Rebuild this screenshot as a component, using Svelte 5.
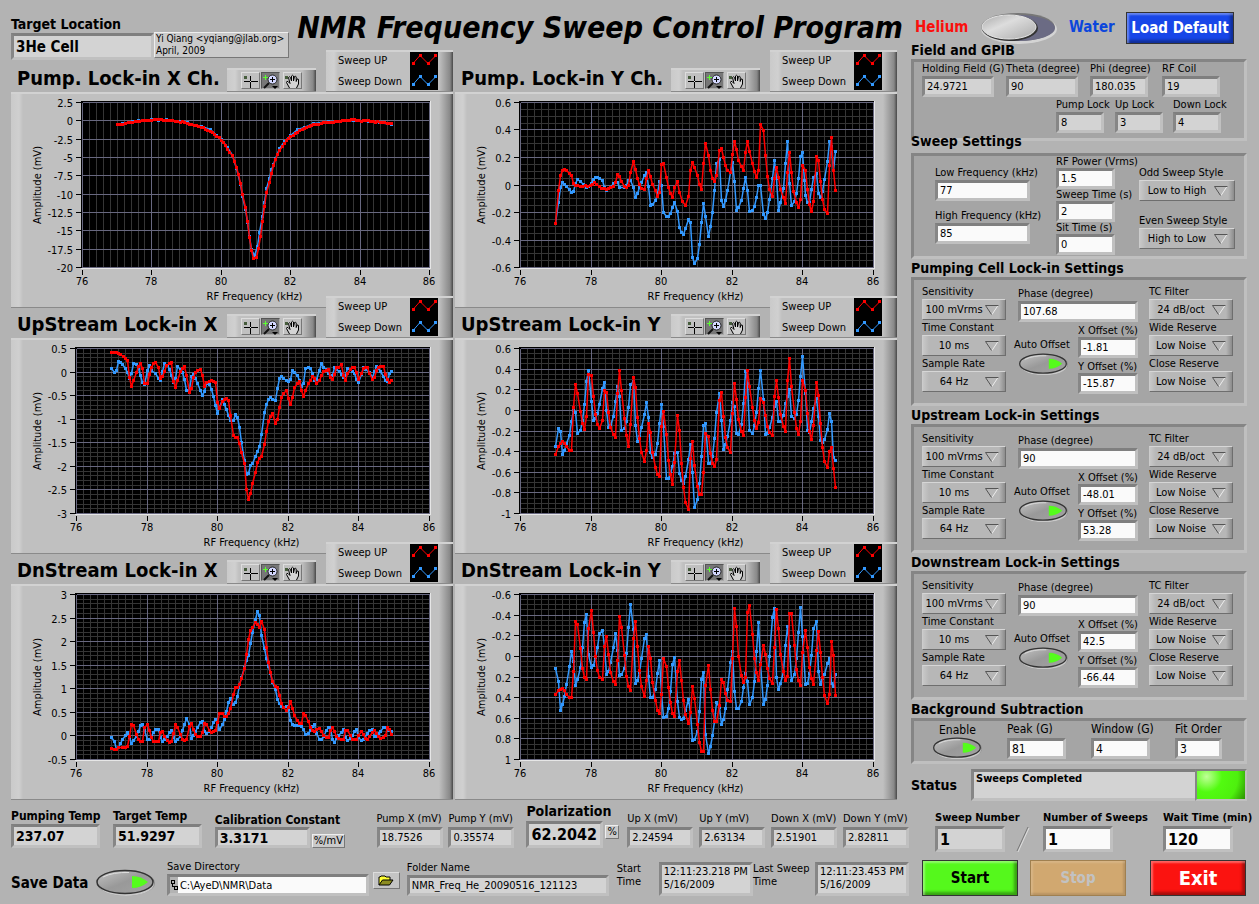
<script lang="ts">
  type Chart = {
    title: string;
    left: number;
    max: number;
    min: number;
    major: number;
    minor: number;
    start: number;
    perKhz: number;
    zero: number;
    perMv: number;
    up: string;
    down: string;
  };

  // Plot area inside a chart panel
  const RIGHT = 418;
  const TOP = 8;
  const BOTTOM = 173;

  const charts: Chart[] = [
    {
      title: 'Pump. Lock-in X Ch.',
      left: 71, max: 2.5, min: -20, major: 2.5, minor: 0,
      start: 247, perKhz: 104.2, zero: 361, perMv: 21.95,
      up: '352,373 360,373 367,371 376,370 384,367 391,367 398,365 405,364 412,364 419,362 427,361 434,361 441,361 448,359 455,359 462,358 469,357 476,357 483,358 490,359 497,360 504,361 511,360 518,361 525,362 532,364 540,365 547,364 554,366 561,369 568,371 575,373 582,376 589,376 596,377 604,380 610,382 616,386 622,389 630,393 637,397 643,401 650,407 658,412 664,421 670,427 676,436 682,447 689,455 698,466 703,484 709,502 715,523 721,549 727,581 736,620 742,662 748,709 754,748 760,772 769,769 775,744 781,706 787,661 793,616 799,576 808,547 814,520 820,496 826,478 833,463 838,451 847,438 853,430 859,421 866,415 873,408 880,404 887,400 893,396 900,390 907,386 914,383 921,381 928,378 935,375 942,373 950,372 957,371 964,370 971,366 978,365 985,365 992,365 1000,365 1007,363 1014,362 1021,362 1028,361 1035,361 1042,360 1049,360 1056,358 1063,358 1070,360 1077,361 1084,362 1091,361 1098,361 1105,361 1112,362 1120,364 1127,365 1134,364 1141,365 1148,365 1155,367 1162,369 1169,370 1176,370',
      down: '352,372 367,370 384,367 398,363 415,359 434,359 455,357 476,361 500,357 518,359 540,363 561,367 575,371 604,377 630,388 650,404 664,418 682,440 698,466 709,505 721,552 727,588 736,625 742,666 748,708 754,745 763,763 772,737 778,695 787,646 793,604 799,565 808,535 814,508 820,492 826,474 838,444 853,423 873,404 893,388 914,380 942,370 985,363 1020,362 1060,361 1105,363 1140,367 1176,371'
    },
    {
      title: 'Pump. Lock-in Y Ch.',
      left: 65, max: 0.6, min: -0.6, major: 0.2, minor: 0.05,
      start: 196, perKhz: 105.9, zero: 554, perMv: 411,
      up: '301,670 310,571 316,526 322,511 328,508 335,511 343,520 349,526 355,550 361,556 368,556 376,557 383,559 390,554 397,559 405,555 412,552 419,547 425,553 433,559 440,565 448,565 455,568 461,565 467,562 476,559 482,547 488,523 494,530 500,545 508,557 514,562 520,556 526,517 535,484 541,508 547,535 554,553 560,565 568,568 574,535 580,511 586,529 593,552 601,571 607,587 613,575 620,493 626,490 634,532 640,562 646,578 652,590 658,560 667,545 673,575 683,602 690,614 700,587 706,511 712,487 718,502 727,527 733,553 739,568 746,490 752,430 760,466 766,511 772,535 778,545 785,527 794,452 799,445 805,472 811,496 817,511 826,517 832,463 838,425 845,448 851,481 859,500 865,511 871,457 878,425 884,454 892,490 898,514 904,532 910,511 916,373 925,391 932,466 938,530 943,566 952,587 958,536 964,502 970,532 976,568 985,592 991,610 997,517 1004,458 1010,517 1016,572 1024,607 1030,622 1037,598 1042,496 1051,511 1057,568 1063,613 1069,634 1075,604 1084,469 1090,481 1096,545 1102,596 1108,628 1117,640 1123,496 1129,412 1135,511 1141,571',
      down: '301,668 310,607 316,562 322,547 328,553 334,558 343,568 349,577 355,574 361,550 367,538 376,544 386,553 394,562 401,559 408,550 415,538 421,532 428,532 434,535 442,541 448,560 455,571 467,562 476,550 487,547 493,562 507,562 513,554 520,541 527,541 535,562 541,592 547,580 553,562 560,547 568,526 574,517 580,559 586,616 592,613 601,601 607,580 614,545 620,554 626,635 634,649 640,649 646,640 652,622 658,607 667,634 673,682 679,697 685,703 691,685 700,656 706,667 712,772 718,790 727,775 733,733 739,667 745,610 752,649 760,709 766,679 772,637 778,571 785,490 794,478 799,601 805,617 811,601 817,571 826,517 832,487 838,545 845,629 851,622 859,601 865,565 871,532 878,571 884,634 892,629 898,619 904,592 910,556 916,556 925,643 931,655 938,637 943,598 952,535 958,481 964,535 970,631 976,607 985,565 991,490 997,425 1003,550 1009,616 1018,604 1024,580 1030,535 1036,469 1042,457 1048,540 1052,586 1058,607 1063,605 1069,568 1075,532 1084,520 1090,580 1096,590 1102,574 1108,538 1117,484 1123,425 1129,440 1135,511 1141,454'
    },
    {
      title: 'UpStream Lock-in X',
      left: 65, max: 0.5, min: -3, major: 0.5, minor: 0.1,
      start: 229, perKhz: 105.9, zero: 185, perMv: 141,
      up: '334,125 343,125 349,125 355,128 361,131 370,137 376,143 382,149 388,200 394,227 400,209 410,185 416,167 421,160 427,173 433,220 442,218 448,191 454,172 460,160 466,157 475,170 481,203 488,197 494,182 500,164 508,160 514,157 520,212 526,230 532,209 541,184 547,175 553,169 559,194 568,245 574,233 580,200 586,185 592,179 600,178 607,194 613,227 619,215 628,214 634,211 640,214 646,217 652,275 658,293 667,272 673,266 679,265 685,271 692,314 700,376 706,382 712,382 718,398 725,425 733,458 739,535 745,566 751,548 758,517 767,485 773,455 778,443 785,439 793,401 799,362 805,334 812,317 818,308 826,338 832,326 838,290 845,262 851,248 859,239 865,265 871,281 877,260 884,232 892,218 898,212 904,239 910,257 916,239 925,220 931,209 937,199 943,203 950,218 958,209 964,194 970,184 978,181 985,178 991,200 997,206 1003,191 1010,172 1016,170 1024,163 1030,194 1036,211 1043,190 1050,178 1057,170 1063,170 1069,185 1076,206 1084,190 1090,173 1096,170 1102,170 1109,188 1117,208 1123,202 1129,181 1136,172 1142,169 1150,169 1156,191 1162,206 1168,217 1175,211',
      down: '334,175 343,187 349,181 355,154 361,157 367,163 376,175 382,187 388,203 394,188 400,160 409,163 416,173 421,194 427,215 433,223 442,181 448,166 454,179 466,190 475,205 481,209 488,182 494,160 501,166 508,178 514,196 520,215 526,205 532,169 541,176 547,187 553,208 559,239 568,236 574,197 580,191 586,203 592,218 601,239 607,254 613,242 619,218 628,221 634,236 640,257 646,284 652,308 658,292 667,266 673,281 679,296 685,314 692,329 700,329 706,311 712,320 718,352 725,395 733,448 739,490 745,488 751,464 758,458 767,439 773,422 778,407 785,371 793,305 799,281 805,266 812,262 818,268 826,269 832,233 838,203 845,199 851,203 859,209 865,214 871,208 877,181 884,185 892,194 898,209 904,227 910,218 916,173 925,170 931,175 937,188 943,209 950,206 958,181 964,160 970,170 978,178 985,188 991,199 997,194 1003,172 1010,178 1018,182 1024,191 1030,200 1036,196 1042,175 1050,178 1057,184 1063,190 1069,206 1076,217 1084,193 1090,172 1096,178 1109,187 1117,200 1123,184 1129,169 1136,175 1142,184 1150,197 1156,209 1162,212 1168,190 1175,182'
    },
    {
      title: 'UpStream Lock-in Y',
      left: 65, max: 0.6, min: -1, major: 0.2, minor: 0.05,
      start: 196, perKhz: 105.9, zero: 331, perMv: 307,
      up: '301,461 310,440 316,431 322,425 329,431 335,440 343,449 349,451 355,323 361,253 367,281 377,335 383,371 388,388 394,350 400,224 409,227 415,290 421,344 428,374 434,386 442,362 448,271 455,278 460,338 467,383 476,404 481,412 487,281 493,212 500,272 508,356 514,406 520,440 527,374 535,232 541,262 547,353 553,415 559,455 568,482 574,449 580,371 586,398 592,455 601,500 607,523 613,529 619,380 626,335 634,404 640,479 646,523 652,553 659,485 667,347 673,392 679,488 686,562 691,604 700,626 706,473 712,425 719,494 727,557 733,580 739,581 745,515 752,401 760,409 766,458 772,490 778,499 785,476 793,302 799,277 805,350 811,412 818,443 826,455 832,341 838,250 845,299 851,359 859,395 865,406 872,293 877,212 884,259 892,323 898,361 904,386 910,368 916,296 925,307 931,347 937,380 943,397 952,406 958,290 964,242 970,293 976,343 985,380 991,395 997,241 1003,178 1009,259 1018,338 1024,385 1030,404 1037,364 1042,242 1051,271 1057,341 1063,395 1069,419 1076,377 1084,247 1090,287 1096,371 1102,442 1108,482 1117,502 1123,454 1129,442 1135,503 1141,562',
      down: '301,439 310,385 316,394 322,463 328,451 335,430 343,406 349,365 355,332 361,337 367,400 376,391 383,362 388,314 394,245 400,212 409,305 415,361 421,356 428,340 434,313 442,265 448,247 454,332 460,383 467,377 476,350 481,304 487,260 493,290 500,392 508,386 514,365 520,322 526,253 535,245 541,377 547,425 553,410 560,382 568,343 574,307 580,352 586,455 593,470 601,462 607,430 613,371 619,313 626,380 634,535 640,535 646,520 652,499 658,460 667,455 673,520 679,541 685,548 691,529 700,478 706,433 712,515 718,620 727,596 733,548 739,469 745,377 751,371 760,490 766,490 772,467 778,415 785,338 793,280 799,362 805,446 811,433 818,410 826,362 832,307 838,320 845,400 851,403 859,374 865,310 871,214 877,250 884,391 892,400 898,377 904,337 910,265 916,212 925,300 931,403 937,400 943,383 952,352 958,319 964,304 970,364 976,364 985,347 991,310 997,290 1003,268 1009,350 1018,355 1024,342 1030,301 1036,229 1042,172 1051,280 1057,391 1063,396 1069,365 1075,325 1085,295 1090,350 1096,421 1102,428 1108,419 1117,388 1123,341 1129,364 1135,470 1141,479'
    },
    {
      title: 'DnStream Lock-in X',
      left: 65, max: 3, min: -0.5, major: 0.5, minor: 0.1,
      start: 229, perKhz: 105.9, zero: 556, perMv: 141.2,
      up: '334,595 343,598 349,597 355,592 367,592 376,590 382,587 388,559 394,521 400,526 409,551 415,568 421,574 427,574 433,532 442,521 448,541 454,562 460,572 466,574 475,574 481,547 488,542 494,557 501,571 508,577 514,574 520,550 526,521 532,530 541,553 547,566 553,571 559,568 567,527 574,518 580,536 587,553 593,559 601,559 607,547 613,518 619,521 628,541 634,545 640,544 646,539 652,517 658,488 667,488 673,497 679,497 685,488 692,475 700,433 706,412 712,410 718,403 725,383 733,355 739,313 745,266 751,241 757,230 766,217 773,221 778,230 785,214 793,238 799,290 805,335 811,367 818,394 826,407 832,412 838,436 844,458 851,472 859,481 865,470 871,452 877,473 884,494 892,511 898,520 904,520 911,490 917,494 925,514 931,532 937,541 943,544 950,538 958,535 964,544 970,556 978,560 985,562 991,541 997,530 1003,544 1009,559 1016,565 1024,568 1030,566 1036,541 1042,539 1050,556 1057,566 1063,568 1069,568 1076,554 1084,544 1090,553 1096,563 1102,566 1109,557 1117,547 1123,541 1129,550 1136,559 1142,563 1150,562 1156,554 1162,532 1168,538 1175,551',
      down: '334,562 343,574 349,598 355,590 361,580 367,568 376,556 382,547 388,562 394,580 400,571 409,559 415,544 421,524 427,523 433,541 442,568 448,566 454,558 460,545 466,538 475,538 481,562 488,574 494,568 501,557 508,547 514,539 520,562 526,574 532,568 541,559 547,541 553,523 559,505 568,521 574,563 580,556 587,544 593,530 601,515 607,514 613,542 619,550 628,544 634,532 640,517 646,506 652,520 658,536 667,523 673,506 679,484 685,457 692,445 700,463 706,457 712,437 718,403 725,380 733,350 739,331 745,314 751,280 757,245 766,208 772,184 778,194 785,256 793,293 799,323 805,347 811,370 818,395 826,418 832,448 838,460 844,467 851,472 859,468 865,476 871,509 877,523 884,526 892,526 898,526 904,529 911,538 917,553 925,550 931,541 937,529 943,523 950,550 958,568 964,568 970,559 978,541 985,530 991,530 997,568 1003,575 1009,565 1016,556 1024,547 1030,538 1036,560 1042,571 1050,563 1057,556 1063,544 1069,538 1076,560 1084,571 1090,568 1102,550 1109,539 1117,538 1123,559 1129,559 1136,550 1142,544 1150,532 1156,530 1162,540 1175,542'
    },
    {
      title: 'DnStream Lock-in Y',
      left: 65, max: -0.6, min: 1, major: 0.2, minor: 0.05,
      start: 196, perKhz: 105.9, zero: 319, perMv: -307.5,
      up: '301,433 310,421 316,418 322,415 328,420 335,433 343,442 349,442 355,364 361,214 367,224 377,295 383,355 389,382 394,388 400,235 409,182 415,247 421,320 428,361 434,382 442,388 448,290 454,260 460,313 467,367 476,394 481,403 487,330 493,200 500,233 508,316 514,380 520,409 527,421 535,265 541,214 547,290 553,361 560,409 568,439 574,391 580,290 586,325 593,398 601,452 607,479 613,490 619,433 626,325 634,350 640,412 646,458 652,488 658,497 667,364 673,332 679,391 685,452 691,493 700,520 706,487 712,410 718,445 727,523 733,577 740,604 746,604 752,406 760,346 766,419 772,481 778,512 785,514 793,464 799,388 805,397 811,430 817,451 826,455 832,325 838,175 845,230 851,320 859,376 865,398 871,383 878,187 884,166 892,253 898,325 904,367 910,391 916,343 925,286 931,313 937,355 943,385 952,400 958,292 964,179 970,235 976,313 985,364 991,391 997,380 1003,190 1009,191 1018,286 1024,359 1030,391 1036,407 1042,307 1051,241 1057,292 1063,352 1069,386 1075,403 1084,301 1090,245 1096,307 1102,383 1108,436 1117,461 1123,433 1129,274 1135,316 1141,436',
      down: '301,355 310,394 316,481 322,463 328,439 335,403 343,349 349,304 355,334 361,407 367,388 377,352 383,292 388,217 394,194 400,313 409,352 415,346 421,322 428,292 434,250 442,241 448,290 454,373 460,365 467,338 476,292 481,250 487,300 493,376 500,373 508,355 514,310 520,232 527,163 535,240 541,400 547,391 553,367 560,325 568,265 574,254 580,380 586,442 593,442 601,418 607,370 613,331 619,430 626,502 634,499 640,475 646,425 652,343 658,322 667,455 673,502 679,508 685,505 691,480 700,448 706,485 712,571 718,568 727,544 733,484 739,388 745,367 752,553 760,610 766,589 772,556 778,512 785,457 793,470 799,523 805,508 811,475 817,418 826,337 832,304 838,424 845,475 851,475 859,454 865,412 871,370 878,394 884,463 892,442 898,394 904,304 910,217 916,340 925,463 931,448 937,406 943,320 952,203 958,176 964,383 970,418 976,400 985,365 991,286 997,230 1003,290 1009,391 1018,373 1024,325 1030,247 1036,172 1042,260 1051,403 1057,400 1063,370 1069,316 1075,236 1084,214 1090,364 1096,403 1102,385 1108,373 1117,340 1123,325 1129,400 1135,409 1141,373'
    }
  ];

  const lockins = [
    { name: 'Pumping Cell', phase: '107.68', x: '-1.81', y: '-15.87' },
    { name: 'Upstream', phase: '90', x: '-48.01', y: '53.28' },
    { name: 'Downstream', phase: '90', x: '42.5', y: '-66.44' }
  ];

  let autoOffset = $state([true, true, true]);
  let saveData = $state(true);
  let subtract = $state(true);
  let water = $state(false);

  function xPos(c: Chart, khz: number) {
    return Math.round(c.left + ((khz - 76) / 10) * (RIGHT - c.left));
  }

  function yPos(c: Chart, mv: number) {
    return Math.round(TOP + ((c.max - mv) / (c.max - c.min)) * (BOTTOM - TOP));
  }

  function range(from: number, to: number, step: number) {
    const n = Math.round(Math.abs(to - from) / step);
    const dir = to > from ? 1 : -1;
    return Array.from({ length: n + 1 }, (_, i) => +(from + dir * i * step).toFixed(2));
  }

  function points(c: Chart, raw: string) {
    return raw.split(' ').map((pair) => {
      const [x, y] = pair.split(',').map(Number);
      return [xPos(c, 76 + (x - c.start) / c.perKhz), yPos(c, (c.zero - y) / c.perMv)];
    });
  }

  function line(c: Chart, raw: string) {
    return 'M' + points(c, raw).map((p) => p.join(' ')).join('L');
  }

  function markers(c: Chart, raw: string) {
    return points(c, raw).map(([x, y]) => `M${x - 1.5} ${y}h3`).join('');
  }

  function verticals(c: Chart, step: number) {
    return range(76, 86, step).map((v) => `M${xPos(c, v)} ${TOP}V${BOTTOM}`).join('');
  }

  function horizontals(c: Chart, step: number) {
    return range(c.max, c.min, step).map((v) => `M${c.left} ${yPos(c, v)}H${RIGHT}`).join('');
  }
</script>

{#snippet field(label: string, value: string, kind = '')}
  <label class="field {kind}">
    <span>{label}</span>
    <input type="text" {value} readonly={kind.includes('ro')} />
  </label>
{/snippet}

{#snippet picker(label: string, value: string)}
  <label class="picker">
    <span>{label}</span>
    <span class="ring">
      <select><option>{value}</option></select>
      <svg width="14" height="10" viewBox="0 0 14 10" aria-hidden="true">
        <path d="M13 .5L7 9.5" stroke="#eee" fill="none" />
        <path d="M13.5 .5H.5L6.5 9.5" stroke="#555" fill="none" />
      </svg>
    </span>
  </label>
{/snippet}

{#snippet led()}
  <svg viewBox="0 0 60 28" aria-hidden="true">
    <defs>
      <linearGradient id="ledFace" x1="0" y1="0" x2="1" y2="1">
        <stop offset="0" stop-color="#c4c4c4" />
        <stop offset=".5" stop-color="#999" />
        <stop offset="1" stop-color="#a2a2a2" />
      </linearGradient>
    </defs>
    <ellipse cx="31" cy="15" rx="29" ry="13" fill="#8c8c8c" />
    <ellipse cx="31" cy="16" rx="28" ry="12" fill="#c9c9c9" />
    <ellipse cx="30" cy="14" rx="28" ry="11.5" fill="url(#ledFace)" stroke="#333" stroke-width="1.5" />
    <path d="M8 9Q18 4 34 4.5" stroke="#e0e0e0" fill="none" />
    <path d="M37 8Q46 8 53 14Q46 20 37 20Z" fill="#55fc1c" />
  </svg>
{/snippet}

{#snippet toolbar()}
  <div class="toolbar">
    <button aria-label="Cursor">
      <svg width="19" height="16" shape-rendering="crispEdges">
        <rect x="3" y="3" width="3" height="3" fill="#465c3c" />
        <path d="M3 8.5h5M11 8.5h6M9.5 3v4M9.5 10v5M8 8.5h3M9.5 7v3" stroke="#000" />
        <rect x="9" y="8" width="1" height="1" fill="#ddd" />
      </svg>
    </button>
    <button class="on" aria-label="Zoom">
      <svg width="19" height="16">
        <path d="M4.5 2v5M2 4.5h5" stroke="#5cff30" />
        <path d="M8 10L3 15" stroke="#111" stroke-width="2" />
        <circle cx="11.5" cy="6.5" r="4.5" fill="#d4d8ff" stroke="#222" />
        <path d="M11.5 4v5M9 6.5h5" stroke="#000" />
        <path d="M11 13h6l-3 3z" fill="#000" />
      </svg>
    </button>
    <button class="pan" aria-label="Pan">
      <svg width="19" height="16">
        <rect x="2" y="3" width="3" height="3" fill="#465c3c" />
        <path d="M6.5 15L3.5 9.5Q3.5 8 5 8.5L7 10.5L5.5 4.5Q6.5 3 7.5 4.5L8.5 8V3Q9.5 1.5 10.5 3V8L11.5 3.5Q12.5 2.5 13.2 4V8.5L14 6Q15.5 5.5 15.5 7V11L13.5 15" fill="#d4d4d4" stroke="#000" />
      </svg>
    </button>
  </div>
{/snippet}

{#snippet legend()}
  <div class="legend">
    <div class="names"><span>Sweep UP</span><span>Sweep Down</span></div>
    <svg width="28" height="38" aria-hidden="true">
      <rect width="28" height="38" fill="#000" />
      <path d="M3 11.5L10 3.5L18 11.5L26 3.5" stroke="#f00" fill="none" />
      <path d="M2 11.5h3M9 3.5h3M17 11.5h3M24 3.5h3" stroke="#f00" stroke-width="3" />
      <path d="M3 32.5L10 24.5L18 32.5L26 24.5" stroke="#39f" fill="none" />
      <path d="M2 32.5h3M9 24.5h3M17 32.5h3M24 24.5h3" stroke="#39f" stroke-width="3" />
    </svg>
  </div>
{/snippet}

<div class="page">
  <main>
    <header>
      <label class="field big target">
        <span>Target Location</span>
        <input type="text" value="3He Cell" readonly />
      </label>
      <p class="note">Yi Qiang &lt;yqiang@jlab.org&gt;<br />April, 2009</p>
      <h1>NMR Frequency Sweep Control Program</h1>
    </header>

    <div class="charts">
      {#each charts as c}
        <section class="chart">
          <div class="bar">
            <h2>{c.title}</h2>
            {@render toolbar()}
            {@render legend()}
          </div>
          <div class="panel">
            <svg viewBox="0 0 442 213" role="img" aria-label={c.title}>
              <rect x={c.left - 1} y={TOP - 1} width={RIGHT - c.left + 3} height={BOTTOM - TOP + 3} fill="#e6e6e6" />
              <rect x={c.left - 1} y={TOP - 1} width={RIGHT - c.left + 2} height={BOTTOM - TOP + 2} fill="#000" />
              <g fill="none" shape-rendering="crispEdges" transform="translate(.5 .5)">
                <path d={verticals(c, 0.2)} stroke="#353535" />
                {#if c.minor}
                  <path d={horizontals(c, c.minor)} stroke="#353535" />
                {/if}
                <path d={verticals(c, 2) + horizontals(c, c.major)} stroke="#686880" />
                {#each range(c.max, c.min, c.major) as v}
                  <path d="M{c.left - 7} {yPos(c, v)}h5" stroke="#000" />
                {/each}
                {#each range(76, 86, 2) as v}
                  <path d="M{xPos(c, v)} {BOTTOM + 2}v5" stroke="#000" />
                {/each}
              </g>
              <g fill="none" transform="translate(.5 .5)" stroke-linejoin="bevel">
                <path d={line(c, c.down)} stroke="#39f" stroke-width="1.5" />
                <path d={markers(c, c.down)} stroke="#39f" stroke-width="3" />
                <path d={line(c, c.up)} stroke="#f00" stroke-width="1.5" />
                <path d={markers(c, c.up)} stroke="#f00" stroke-width="3" />
              </g>
              {#each range(c.max, c.min, c.major) as v}
                <text x={c.left - 9} y={yPos(c, v) + 5} text-anchor="end">{v}</text>
              {/each}
              {#each range(76, 86, 2) as v}
                <text x={xPos(c, v)} y="191" text-anchor="middle">{v}</text>
              {/each}
              <text x={(c.left + RIGHT) / 2 - 1} y="206" text-anchor="middle">RF Frequency (kHz)</text>
              <text transform="translate(30 91) rotate(-90)" text-anchor="middle">Amplitude (mV)</text>
            </svg>
          </div>
        </section>
      {/each}
    </div>

    <div class="readouts">
      {@render field('Pumping Temp', '237.07', 'ro strong')}
      {@render field('Target Temp', '51.9297', 'ro strong')}
      <div class="unitField calibration">
        {@render field('Calibration Constant', '3.3171', 'ro strong')}
        <span class="unit">%/mV</span>
      </div>
      {@render field('Pump X (mV)', '18.7526', 'ro')}
      {@render field('Pump Y (mV)', '0.35574', 'ro')}
      <div class="unitField polarization">
        {@render field('Polarization', '62.2042', 'ro big')}
        <span class="unit">%</span>
      </div>
      {@render field('Up X (mV)', '2.24594', 'ro')}
      {@render field('Up Y (mV)', '2.63134', 'ro')}
      {@render field('Down X (mV)', '2.51901', 'ro')}
      {@render field('Down Y (mV)', '2.82811', 'ro')}
    </div>

    <div class="saving">
      <span class="head" id="saveLabel">Save Data</span>
      <button class="toggle large" role="switch" aria-checked={saveData} aria-labelledby="saveLabel" onclick={() => (saveData = !saveData)}>
        {@render led()}
      </button>
      <label class="field path">
        <span>Save Directory</span>
        <span class="well">
          <svg width="8" height="12" shape-rendering="crispEdges" aria-hidden="true">
            <path d="M1.5 1.5h3v3h-3zM2.5 5v2.5H4M4.5 7.5h3v3h-3z" stroke="#000" fill="none" />
          </svg>
          <input type="text" value="C:\AyeD\NMR\Data" />
        </span>
      </label>
      <button class="browse" aria-label="Browse">
        <svg width="16" height="11" aria-hidden="true">
          <path d="M1 10V2h1l1-1h4l1 1h4v3" fill="#ff3" stroke="#000" />
          <path d="M1 10L4.5 5H15L11.5 10Z" fill="#8c8c20" stroke="#000" />
        </svg>
      </button>
      {@render field('Folder Name', 'NMR_Freq_He_20090516_121123', 'ro folder')}
      <span class="when">Start Time</span>
      <output class="stamp">12:11:23.218 PM<br />5/16/2009</output>
      <span class="when">Last Sweep Time</span>
      <output class="stamp">12:11:23.453 PM<br />5/16/2009</output>
    </div>
  </main>

  <aside>
    <div class="mode">
      <span class="helium">Helium</span>
      <button class="slide" role="switch" aria-checked={water} aria-label="Helium or Water" onclick={() => (water = !water)}>
        <svg width="78" height="32" viewBox="0 0 78 32" aria-hidden="true">
          <defs>
            <linearGradient id="knob" x1="0" y1="0" x2="1" y2="1">
              <stop offset="0" stop-color="#aaa" />
              <stop offset=".4" stop-color="#ddd" />
              <stop offset="1" stop-color="#aaa" />
            </linearGradient>
          </defs>
          <ellipse cx="39" cy="17" rx="38" ry="15" fill="#d4d4d4" />
          <ellipse cx="38" cy="15" rx="37" ry="14" fill="#777" />
          <ellipse cx="39" cy="16" rx="36" ry="13" fill="#6b6b84" />
          <ellipse cx={water ? 48 : 30} cy="16" rx="28" ry="13" fill="#333" />
          <ellipse cx={water ? 47 : 29} cy="15" rx="27" ry="12" fill="url(#knob)" stroke="#e6e6e6" />
        </svg>
      </button>
      <span class="water">Water</span>
      <button class="push blue">Load Default</button>
    </div>

    <section>
      <h3>Field and GPIB</h3>
      <div class="box gpib">
        <div class="coils">
          {@render field('Holding Field (G)', '24.9721', 'ro')}
          {@render field('Theta (degree)', '90', 'ro')}
          {@render field('Phi (degree)', '180.035', 'ro')}
          {@render field('RF Coil', '19', 'ro')}
        </div>
        <div class="locks">
          {@render field('Pump Lock', '8', 'ro')}
          {@render field('Up Lock', '3', 'ro')}
          {@render field('Down Lock', '4', 'ro')}
        </div>
      </div>
    </section>

    <section class="sweepSection">
      <h3>Sweep Settings</h3>
      <div class="box sweep">
        <div class="freqs">
          {@render field('Low Frequency (kHz)', '77')}
          {@render field('High Frequency (kHz)', '85')}
        </div>
        <div class="times">
          {@render field('RF Power (Vrms)', '1.5')}
          {@render field('Sweep Time (s)', '2')}
          {@render field('Sit Time (s)', '0')}
        </div>
        <div class="styles">
          {@render picker('Odd Sweep Style', 'Low to High')}
          {@render picker('Even Sweep Style', 'High to Low')}
        </div>
      </div>
    </section>

    {#each lockins as l, i}
      <section>
        <h3>{l.name} Lock-in Settings</h3>
        <div class="box lockin">
          <div class="stack">
            {@render picker('Sensitivity', '100 mVrms')}
            {@render picker('Time Constant', '10 ms')}
            {@render picker('Sample Rate', '64 Hz')}
          </div>
          <div class="middle">
            {@render field('Phase (degree)', l.phase, 'phase')}
            <div class="auto">
              <span id="auto{i}">Auto Offset</span>
              <button class="toggle" role="switch" aria-checked={autoOffset[i]} aria-labelledby="auto{i}" onclick={() => (autoOffset[i] = !autoOffset[i])}>
                {@render led()}
              </button>
            </div>
            <div class="offsets">
              {@render field('X Offset (%)', l.x)}
              {@render field('Y Offset (%)', l.y)}
            </div>
          </div>
          <div class="stack">
            {@render picker('TC Filter', '24 dB/oct')}
            {@render picker('Wide Reserve', 'Low Noise')}
            {@render picker('Close Reserve', 'Low Noise')}
          </div>
        </div>
      </section>
    {/each}

    <section>
      <h3>Background Subtraction</h3>
      <div class="box background">
        <div class="enable">
          <span id="enable">Enable</span>
          <button class="toggle" role="switch" aria-checked={subtract} aria-labelledby="enable" onclick={() => (subtract = !subtract)}>
            {@render led()}
          </button>
        </div>
        {@render field('Peak (G)', '81')}
        {@render field('Window (G)', '4')}
        {@render field('Fit Order', '3', 'order')}
      </div>
    </section>

    <div class="status">
      <span class="head">Status</span>
      <output class="message">Sweeps Completed</output>
      <span class="lamp"></span>
    </div>

    <div class="counts">
      {@render field('Sweep Number', '1', 'ro strong')}
      <svg width="14" height="26" aria-hidden="true">
        <path d="M1 25L12 1" stroke="#777" />
        <path d="M2 26L13 2" stroke="#ddd" />
      </svg>
      {@render field('Number of Sweeps', '1', 'strong')}
      {@render field('Wait Time (min)', '120', 'strong')}
    </div>

    <div class="actions">
      <button class="push green">Start</button>
      <button class="push tan" disabled>Stop</button>
      <button class="push red">Exit</button>
    </div>
  </aside>
</div>

<style>
  :global(body) {
    margin: 0;
    background: #b3b3b3;
  }

  .page {
    display: grid;
    grid-template-columns: minmax(0, 1fr) 336px;
    column-gap: 2px;
    padding: 0 12px 0 11px;
    font: 11px/14px "DejaVu Sans Condensed", "DejaVu Sans", sans-serif;
    color: #000;
  }

  h1,
  h2,
  h3,
  p {
    margin: 0;
  }

  button,
  input,
  select {
    font: inherit;
    color: inherit;
    box-sizing: border-box;
    margin: 0;
    border-radius: 0;
  }

  button {
    padding: 0;
    border: none;
    background: none;
    cursor: pointer;
  }

  /* ---- sunken text boxes ---- */

  .field {
    display: flex;
    flex-direction: column;
    white-space: nowrap;
  }

  .field input,
  .well,
  .stamp,
  .message {
    height: 21px;
    padding: 0 2px;
    border: 3px solid;
    border-color: #7f7f7f #c0c0c0 #c0c0c0 #868686;
    background: #fafafa;
  }

  .field input {
    width: 100%;
    outline: none;
  }

  .ro input,
  .target input,
  .stamp,
  .message {
    background: #d3d3d3;
  }

  .strong,
  .big,
  .head {
    font-weight: bold;
  }

  .strong {
    font-size: 12px;
  }

  .strong input {
    height: 24px;
    font-size: 14px;
  }

  .big {
    font-size: 14px;
  }

  .big input {
    height: 27px;
    font-size: 16px;
  }

  .head {
    font-size: 15px;
  }

  /* ---- top ---- */

  header {
    display: flex;
    height: 50px;
    align-items: flex-start;
  }

  .target {
    flex: none;
    width: 143px;
    padding-top: 16px;
    line-height: 17px;
  }

  .target input {
    font-size: 15px;
  }

  .note {
    flex: none;
    box-sizing: border-box;
    width: 135px;
    margin-top: 32px;
    padding: 0 1px;
    border: 1px solid;
    border-color: #eee #777 #777 #eee;
    background: #cacaca;
    font-size: 10px;
    line-height: 12px;
    white-space: nowrap;
  }

  h1 {
    flex: 1;
    padding: 9px 6px 0 0;
    font-size: 30px;
    line-height: 38px;
    font-style: italic;
    text-align: right;
    white-space: nowrap;
  }

  /* ---- charts ---- */

  .charts {
    display: grid;
    grid-template-columns: repeat(2, minmax(0, 1fr));
    column-gap: 2px;
    padding-right: 12px;
  }

  .chart {
    margin-bottom: -12px;
  }

  .chart:nth-last-child(-n + 2) {
    margin-bottom: 0;
  }

  .bar {
    display: flex;
    height: 42px;
    align-items: flex-end;
  }

  h2 {
    flex: 1;
    padding: 0 0 1px 6px;
    font-size: 20px;
    line-height: 26px;
    white-space: nowrap;
  }

  .toolbar,
  .legend,
  .panel {
    box-sizing: border-box;
    border-top: 2px solid #d2d2d2;
    border-bottom: 1px solid #8a8a8a;
    background: linear-gradient(to right, #cacaca, #d0d0d0 8px, #c0c0c0 12px, #c0c0c0 calc(100% - 14px), #888 calc(100% - 3px), #484848);
  }

  .toolbar {
    display: flex;
    width: 89px;
    height: 24px;
    padding: 2px 0 0 14px;
  }

  .toolbar button {
    width: 19px;
    height: 17px;
    margin-right: 1px;
    border: 1px solid;
    border-color: #ddd #777 #777 #ddd;
  }

  .toolbar .on {
    background: #777;
    border-color: #555 #aaa #aaa #555;
  }

  .toolbar .pan {
    margin-left: 2px;
  }

  .toolbar svg {
    display: block;
    margin: -1px;
  }

  .legend {
    position: relative;
    display: flex;
    justify-content: space-between;
    width: 127px;
    height: 42px;
    margin-left: 10px;
    padding: 0 15px 0 12px;
  }

  .names {
    display: flex;
    flex-direction: column;
    gap: 7px;
    padding-top: 2px;
  }

  .panel {
    height: 216px;
  }

  .panel svg {
    display: block;
    width: 100%;
    font-size: 11px;
  }

  /* ---- bottom readouts ---- */

  .readouts,
  .saving {
    display: grid;
    height: 48px;
    align-items: end;
  }

  .readouts {
    grid-template-columns: 102fr 102fr 162fr 72fr 78fr 101fr 72fr 72fr 72fr 65fr;
  }

  .readouts > .field {
    width: 66px;
  }

  .readouts > .strong {
    width: 89px;
  }

  .readouts .strong {
    line-height: 16px;
  }

  .readouts .field:not(.strong, .big) span {
    line-height: 16px;
  }

  .unitField {
    display: flex;
    align-items: flex-end;
    gap: 2px;
  }

  .calibration .field {
    width: 95px;
  }

  .readouts .calibration .strong {
    line-height: 13px;
  }

  .calibration .field input {
    height: 21px;
  }

  .polarization .field {
    width: 77px;
    line-height: 19px;
  }

  .unit {
    padding: 0 1px;
    border: 1px solid;
    border-color: #eee #777 #777 #eee;
    background: #cacaca;
    line-height: 12px;
  }

  .polarization .unit {
    margin-bottom: 9px;
  }

  .saving {
    grid-template-columns: 84fr 72fr 206fr 34fr 210fr 42fr 94fr 62fr 94fr;
    white-space: nowrap;
  }

  .saving .head {
    line-height: 26px;
  }

  .path,
  .folder {
    width: 202px;
  }

  .well {
    display: flex;
    box-sizing: border-box;
    height: 22px;
    padding: 0;
    align-items: center;
    background: #b3b3b3;
  }

  .well svg {
    flex: none;
  }

  .path .well input {
    height: 16px;
    border: none;
  }

  .browse {
    align-self: end;
    width: 27px;
    height: 17px;
    margin-bottom: 7px;
    border: 1px solid;
    border-color: #ddd #777 #777 #ddd;
    background: #c4c4c4;
  }

  .browse svg {
    display: block;
    margin: 1px auto;
  }

  .when {
    white-space: normal;
    line-height: 13px;
    padding-bottom: 8px;
  }

  .stamp {
    height: 28px;
    line-height: 13px;
  }

  /* ---- sidebar ---- */

  .mode {
    display: flex;
    height: 41px;
    padding: 12px 13px 0 4px;
    box-sizing: border-box;
    align-items: flex-start;
    justify-content: space-between;
    font-size: 15px;
    font-weight: bold;
    line-height: 30px;
  }

  .slide svg {
    display: block;
  }

  .helium {
    color: #fb0f0c;
  }

  .water {
    color: #0c46dc;
  }

  .push {
    border: 1px solid #333;
    font-weight: bold;
    box-shadow: inset 2px 2px 2px rgb(255 255 255 / 35%), inset -3px -3px 3px rgb(0 0 0 / 35%);
  }

  .blue {
    width: 108px;
    height: 32px;
    background: #1846e8;
    color: #fff;
  }

  h3 {
    position: relative;
    font-size: 14px;
    line-height: 18px;
  }

  .box {
    display: flex;
    box-sizing: border-box;
    border: 3px solid;
    border-color: #858585 #bfbfbf #bfbfbf #858585;
    background: #a5a5a5;
  }

  .gpib {
    flex-direction: column;
    height: 82px;
  }

  .coils,
  .locks {
    display: grid;
  }

  .coils {
    grid-template-columns: 84px 84px 72px 58px;
    padding-left: 8px;
    align-items: start;
  }

  .coils .field:nth-child(-n + 2) input {
    width: 72px;
  }

  .coils .field {
    width: 58px;
  }

  .locks {
    grid-template-columns: 59px 58px 58px;
    justify-content: end;
    padding: 1px 13px 0 0;
  }

  .locks .field {
    width: 48px;
  }

  .sweepSection {
    margin-top: -9px;
  }

  .sweepSection h3 {
    padding-bottom: 3px;
  }

  .sweep {
    height: 106px;
  }

  .freqs {
    width: 121px;
    padding: 10px 0 0 21px;
  }

  .freqs .field {
    width: 95px;
    margin-bottom: 8px;
  }

  .times {
    width: 83px;
  }

  .times .field {
    width: 59px;
  }

  .times .field span {
    line-height: 12px;
  }

  .styles {
    width: 96px;
    padding-top: 9px;
  }

  .styles .picker {
    margin-bottom: 12px;
  }

  .picker {
    display: block;
    line-height: 15px;
  }

  .ring {
    position: relative;
    display: block;
  }

  .ring select {
    display: block;
    width: 100%;
    height: 21px;
    padding: 0 20px 0 0;
    appearance: none;
    border: 1px solid;
    border-color: #d6d6d6 #6e6e6e #6e6e6e #ccc;
    background: linear-gradient(to right, #c8c8c8, #b7b7b7 6px, #b7b7b7 calc(100% - 6px), #8c8c8c);
    text-align-last: center;
  }

  .ring svg {
    position: absolute;
    right: 7px;
    top: 6px;
    pointer-events: none;
  }

  .lockin {
    height: 129px;
    padding: 4px 11px 0 8px;
  }

  .stack {
    width: 84px;
  }

  .middle {
    display: grid;
    width: 124px;
    grid-template-columns: 64px 60px;
    align-content: start;
    margin: 0 auto 0 8px;
    padding-top: 3px;
  }

  .phase {
    grid-column: span 2;
    margin-left: 4px;
  }

  .auto {
    padding-top: 16px;
    white-space: nowrap;
  }

  .offsets {
    display: grid;
    align-content: start;
    padding-top: 3px;
    gap: 3px;
  }

  .offsets .field span {
    line-height: 12px;
  }

  .toggle {
    display: block;
    width: 50px;
  }

  .toggle svg {
    display: block;
    width: 100%;
  }

  .toggle.large {
    width: 60px;
  }

  .auto .toggle {
    margin-left: 4px;
  }

  .background {
    height: 46px;
    padding-left: 18px;
  }

  .background .field {
    width: 59px;
    margin-right: 25px;
    font-size: 12px;
    line-height: 17px;
  }

  .background .order {
    width: 47px;
    margin-right: 0;
  }

  .enable {
    width: 75px;
    padding-top: 3px;
    font-size: 12px;
    line-height: 12px;
  }

  .enable span {
    padding-left: 7px;
  }

  .status {
    display: flex;
    margin-top: 5px;
    align-items: center;
  }

  .status .head {
    width: 60px;
    font-size: 14px;
  }

  .message {
    flex: 1;
    height: 26px;
    font-weight: bold;
    border-right: none;
  }

  .lamp {
    width: 48px;
    height: 28px;
    border: 2px solid;
    border-color: #7f7f7f #c0c0c0 #c0c0c0 #868686;
    background: radial-gradient(circle at 20% 20%, #c0ff98, #52fb10 35%, #4ef00e 70%, #2a9000);
  }

  .counts {
    display: grid;
    grid-template-columns: 81px 27px 120px 72px;
    padding: 9px 0 0 24px;
    align-items: end;
    white-space: nowrap;
  }

  .counts .strong {
    width: 70px;
    font-size: 11px;
    line-height: 16px;
  }

  .counts .field input {
    height: 26px;
    font-size: 16px;
  }

  .actions {
    display: grid;
    grid-template-columns: 108px 120px 96px;
    padding: 8px 0 0 11px;
  }

  .actions .push {
    width: 96px;
    height: 36px;
    font-size: 15px;
  }

  .green {
    background: #55f81c;
  }

  .actions .tan {
    border-color: #a08050;
    background: #d1a870;
    color: #c2c2c2;
    box-shadow: inset 2px 2px 2px rgb(255 255 255 / 15%), inset -2px -2px 2px rgb(0 0 0 / 12%);
  }

  .actions .red {
    background: #fb1310;
    color: #fff;
    font-size: 20px;
  }
</style>
